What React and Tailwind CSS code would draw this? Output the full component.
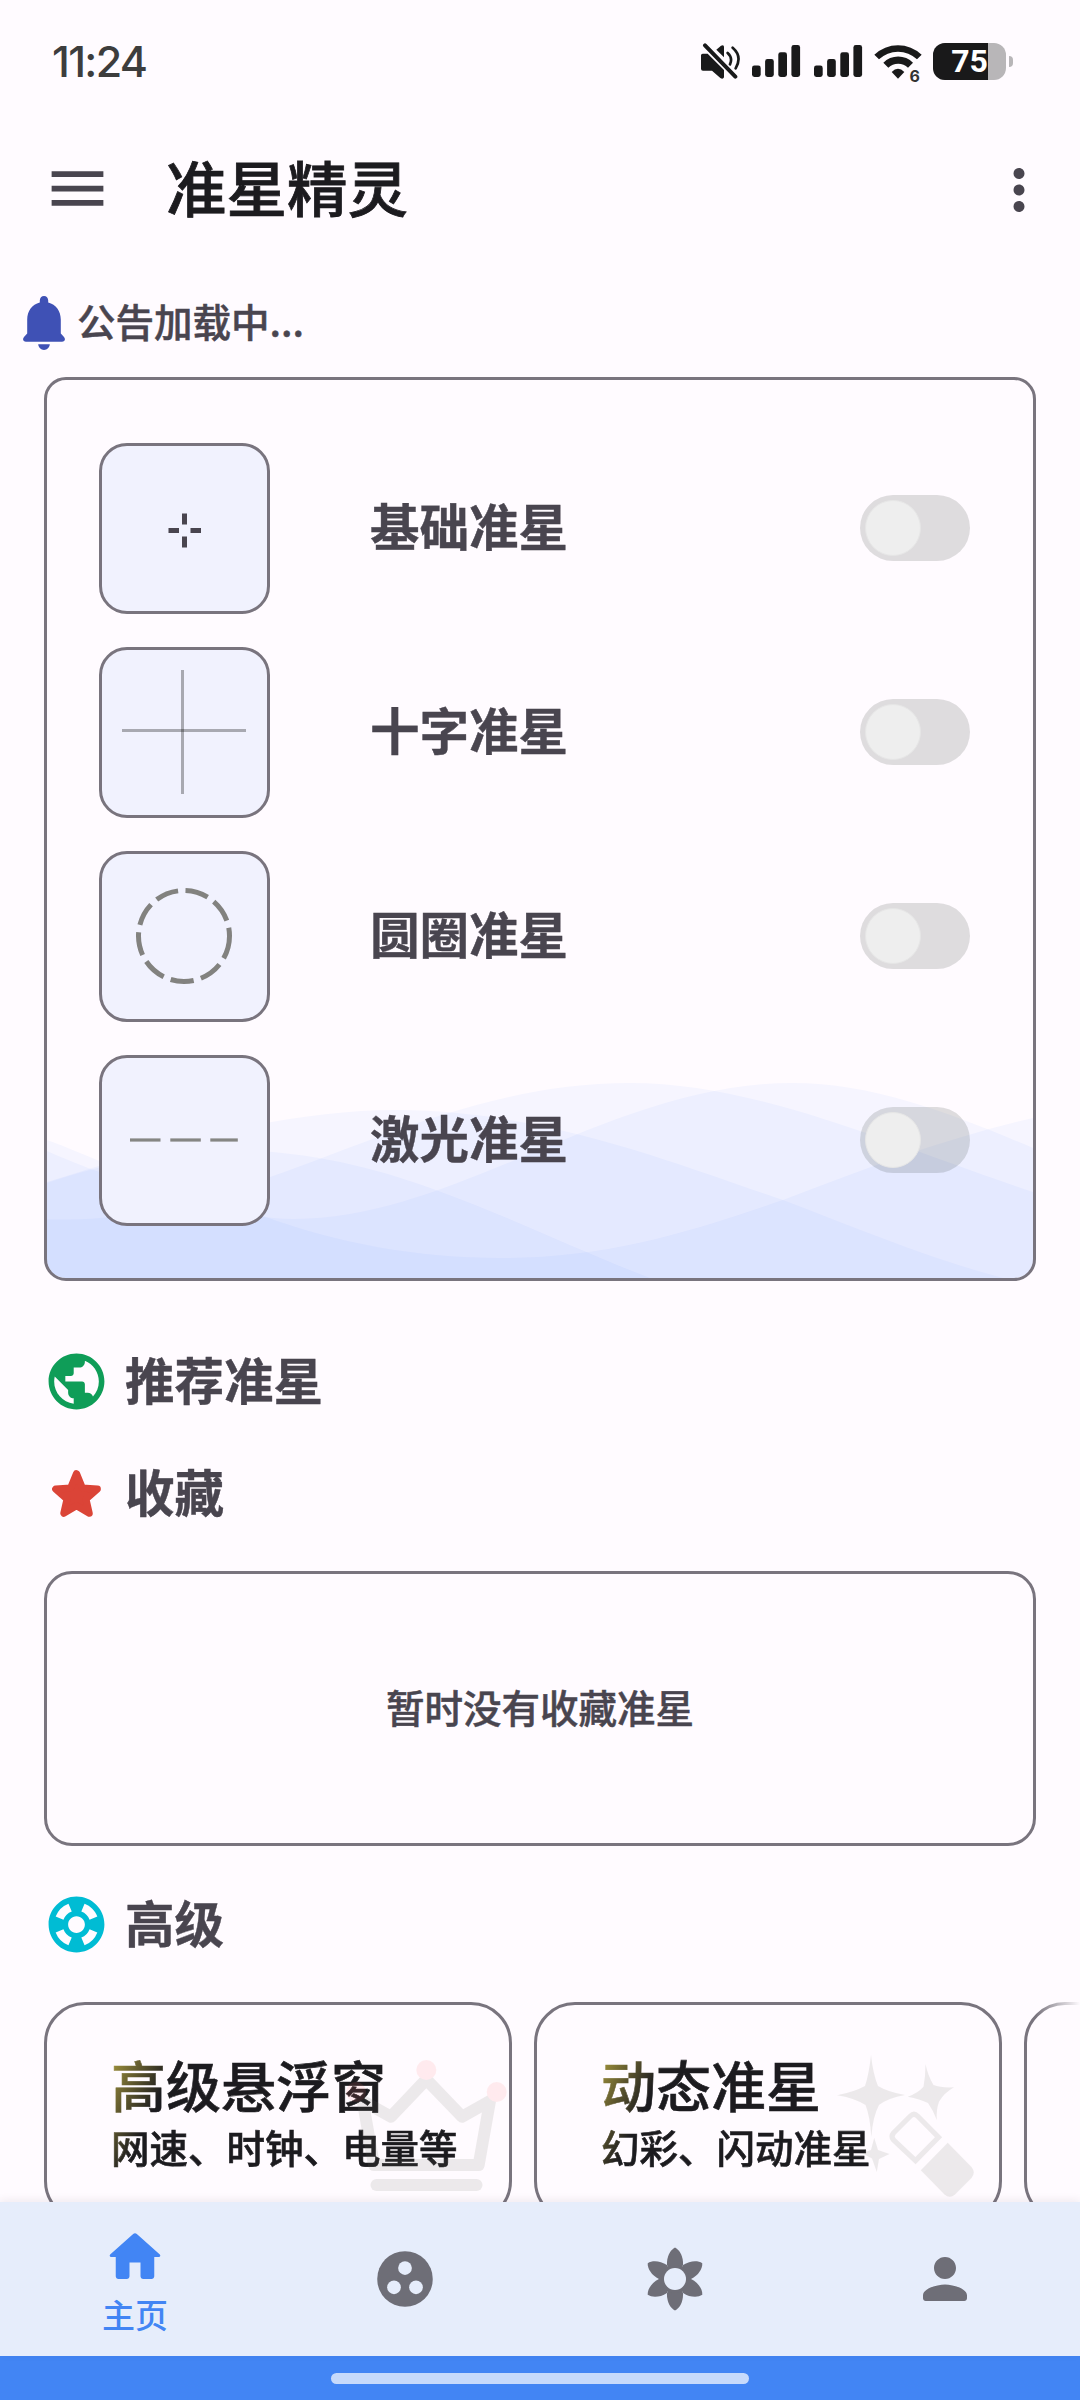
import React, { useState } from 'react';
import { MdPublic, MdSupport, MdMenu, MdMoreVert } from 'react-icons/md';

const SignalBars = ({ className }) => (
  <svg viewBox="0 0 49 32" className={`w-[49px] h-[32px] ${className}`} fill="#19191a">
    <rect x="0" y="20.5" width="8.7" height="11.5" rx="2.4" />
    <rect x="13.1" y="14" width="8.7" height="18" rx="2.4" />
    <rect x="26.3" y="7.3" width="8.7" height="24.7" rx="2.4" />
    <rect x="39.4" y="0" width="8.7" height="32" rx="2.4" />
  </svg>
);

const StatusBar = () => (
  <div className="flex h-[122px] shrink-0 items-center pl-[52px] pr-[67px]">
    <span className="text-[43px] leading-none tracking-[-1.7px] text-[#3d3d3d] font-['Inter'] font-medium">11:24</span>
    <div className="ml-auto flex items-center">
      <svg viewBox="0 0 117 108" className="w-[39px] h-[36px]" fill="#19191a">
        <path d="M0 37Q0 32 5 32H20L69 81V103Q66 110 58 105L33 83H6Q0 83 0 77Z" />
        <path d="M46 20L60 8Q69 4 69 12V43Z" />
        <path d="M12 7L103 101" stroke="#19191a" strokeWidth="12" strokeLinecap="round" />
        <path d="M80 30Q96 44 87 64M95 14Q125 40 104 76" stroke="#19191a" strokeWidth="8" strokeLinecap="round" fill="none" />
      </svg>
      <SignalBars className="ml-[12px]" />
      <SignalBars className="ml-[13px]" />
      <div className="relative ml-[11px] w-[48px] h-[35px]">
        <svg viewBox="0 0 142 105" className="w-[48px] h-[35px]" fill="#19191a">
          <path d="M0 32A103 103 0 0 1 142 32L128 46A82 82 0 0 0 14 46Z" />
          <path d="M27 56A62 62 0 0 1 116 56L101 71A42 42 0 0 0 42 71Z" />
          <path d="M52 84Q71 65 90 84L71 104Z" />
        </svg>
        <span className="absolute -bottom-[5px] right-[2px] text-[16px] leading-none font-bold text-[#333] font-['Inter']">6</span>
      </div>
      <div className="relative ml-[11px] flex h-[37px] w-[73px] items-center justify-center overflow-hidden rounded-[12px] bg-[#b8b6b8]">
        <div className="absolute inset-y-0 left-0 w-[55px] bg-[#19191a]" />
        <span className="relative text-[32px] leading-none font-bold text-white font-['Roboto']">75</span>
      </div>
      <div className="ml-[3px] h-[11px] w-[4px] rounded-r-full bg-[#b8b6b8]" />
    </div>
  </div>
);

const Waves = () => (
  <svg viewBox="0 0 986 200" className="absolute bottom-0 left-0 h-[200px] w-full" fill="#4a80ff" fillOpacity="0.046">
    <path d="M0 141.5H20C210 141.5 370 5 583 5C710 5 840 65 986 114V200H0Z" />
    <path d="M0 62C90 95 160 141 247 141C410 141 565 5 745 5C830 5 910 38 986 70V200H0Z" />
    <path d="M0 104C110 70 230 32 350 32C500 32 640 90 736 122C810 150 880 180 956 200H0Z" />
    <path d="M0 105C60 85 120 72 175 72C260 72 330 90 394 114C470 142 530 172 603 200H0Z" />
    <path d="M0 73C100 118 160 118 216 138C290 165 370 180 454 180C560 180 640 155 736 122C820 90 900 60 986 40V200H0Z" />
  </svg>
);

// previews are drawn on the same 171px square as the tile
const previews = {
  basic: (
    <g fill="#49454f">
      <rect x="83" y="70.5" width="5" height="11" />
      <rect x="83" y="93.5" width="5" height="11" />
      <rect x="69.5" y="85" width="10.5" height="5" />
      <rect x="91.5" y="85" width="10.5" height="5" />
    </g>
  ),
  cross: (
    <g fill="#000" fillOpacity="0.3">
      <rect x="82" y="23" width="3" height="124" />
      <rect x="23" y="82" width="124" height="3" />
    </g>
  ),
  circle: (
    <circle cx="85" cy="85" r="45.5" fill="none" stroke="#82827f" strokeWidth="5" strokeDasharray="23.3 7.5" />
  ),
  laser: (
    <g fill="#858683">
      <rect x="31" y="83.4" width="30.5" height="3.2" />
      <rect x="71.3" y="83.4" width="30.5" height="3.2" />
      <rect x="111.3" y="83.4" width="27.5" height="3.2" />
    </g>
  )
};

const Switch = ({ checked, onChange }) => (
  <button
    onClick={onChange}
    className={`h-[66px] w-[110px] rounded-full p-[5px] ${checked ? 'bg-[#4285f4]' : 'bg-[rgba(0,16,0,0.13)]'}`}
  >
    <div className={`size-[56px] rounded-full border border-[#e6e6e6] bg-[#eeeeee] ${checked ? 'ml-auto' : ''}`} />
  </button>
);

const CrosshairRow = ({ type, name }) => {
  const [checked, setChecked] = useState(false);

  return (
    <div className="relative flex items-center">
      <div className="size-[171px] overflow-hidden rounded-[28px] border-[3px] border-[#79747e] bg-[#f1f2fe]">
        <svg viewBox="0 0 171 171" className="-m-[3px] size-[171px]">{previews[type]}</svg>
      </div>
      <span className="ml-[100px] -mt-[7px] text-[49.5px] leading-none font-bold [-webkit-text-stroke:0.4px]">{name}</span>
      <div className="-mt-[2px] ml-auto flex">
        <Switch checked={checked} onChange={() => setChecked(!checked)} />
      </div>
    </div>
  );
};

const SectionTitle = ({ icon, children }) => (
  <div className="flex h-[112px] shrink-0 items-center pl-[43px]">
    {icon}
    <h2 className="ml-[15px] -mt-[5px] text-[49.5px] leading-none font-bold [-webkit-text-stroke:0.4px]">{children}</h2>
  </div>
);

const StarIcon = () => (
  <svg viewBox="0 0 66 66" className="size-[67px]" fill="#db4437" stroke="#db4437" strokeWidth="7" strokeLinejoin="round">
    <path d="M33 13.5L38.7 27.5L53.5 28.7L42.3 38.5L45.5 52.5L33 45L20.5 52.5L23.7 38.5L12.5 28.7L27.3 27.5Z" />
  </svg>
);

const CrownArt = () => (
  <svg viewBox="0 0 468 220" className="absolute -left-[3px] -top-[3px] h-[220px] w-[468px] opacity-12">
    <path
      d="M318.7 99L347 114.7L382.3 77.5L418 114.7L446 99L434.7 163H330Z"
      fill="none" stroke="#6c6c60" strokeWidth="12" strokeLinejoin="round"
    />
    <rect x="326.5" y="177" width="112" height="12" rx="6" fill="#6c6c60" />
    <circle cx="312" cy="90" r="10" fill="#ff7a7a" />
    <circle cx="382.3" cy="68" r="10" fill="#ff7a7a" />
    <circle cx="452.7" cy="90" r="10" fill="#ff7a7a" />
  </svg>
);

const WandArt = () => (
  <svg viewBox="0 0 468 220" className="absolute -left-[3px] -top-[3px] h-[220px] w-[468px] opacity-12" fill="#6c6c60">
    <path d="M337 53Q339 72 344 84Q354 90 371 93Q354 96 345 103Q339 114 337.3 135Q336 114 331.5 103Q320 96 303 93.3Q320 90 331 84Q335 72 337 53Z" />
    <path d="M391.5 62Q394 74 399.5 83Q407 86 420 85.3Q410 91 405 99.7Q402 108 402.8 118Q399 108 394 101Q386 97 373.7 94.7Q384 91 389.5 84.7Q391.5 74 391.5 62Z" />
    <path d="M340.2 135.7L344 148L355.5 152L345 157L342.8 170L338 156.5L328 151L337 148Z" />
    <path d="M381.5 158.6L404.5 135.2L383.5 114Q380 110.5 376.5 114L359.5 131Q356.5 134.5 359.5 138Z" fill="none" stroke="#6c6c60" strokeWidth="5.2" />
    <path d="M413.7 140.7L437.5 165Q442 170.7 437.5 176L421 192.5Q415.8 197 410.5 192.5L386.8 168.3Z" />
  </svg>
);

const AdvancedCard = ({ title, desc, art }) => (
  <div className="relative h-[220px] w-[468px] shrink-0 rounded-[41px] border-[3px] border-[#79747e] pl-[64px] pt-[48px]">
    <div className="w-fit bg-[linear-gradient(115deg,#a89a3e_0px,#1c1b1f_62px)] bg-clip-text font-medium text-transparent whitespace-nowrap [-webkit-text-stroke:0.6px_transparent]">
      <div className="text-[55px] leading-[60px]">{title}</div>
      <div className="mt-[8px] text-[38.5px] leading-[50px]">{desc}</div>
    </div>
    {art}
  </div>
);

const NavItem = ({ label, children }) => (
  <button className={`flex flex-1 flex-col items-center justify-center ${label ? 'text-[#4285f4]' : 'text-[#6e6e77]'}`}>
    {children}
    {label && <span className="mt-[6px] mb-[2px] text-[33px] leading-[36px] font-medium">{label}</span>}
  </button>
);

const BottomNav = () => (
  <nav className="relative flex h-[154px] shrink-0 bg-[#e6edfb] shadow-[0_-2px_8px_rgba(60,40,50,0.08)]">
    <NavItem label="主页">
      <svg viewBox="0 0 24 24" className="size-[66px]" fill="currentColor">
        <path d="M10 19v-5h4v5c0 .55.45 1 1 1h3c.55 0 1-.45 1-1v-7h1.7c.46 0 .68-.57.33-.87L12.67 3.6c-.38-.34-.96-.34-1.34 0l-8.36 7.53c-.34.3-.13.87.33.87H5v7c0 .55.45 1 1 1h3c.55 0 1-.45 1-1z" />
      </svg>
    </NavItem>
    <NavItem>
      <svg viewBox="0 0 24 24" className="size-[66px]">
        <circle cx="12" cy="12" r="10.1" fill="currentColor" />
        <g fill="#e6edfb">
          <circle cx="12" cy="8" r="2.5" />
          <circle cx="8" cy="15" r="2.5" />
          <circle cx="16" cy="15" r="2.5" />
        </g>
      </svg>
    </NavItem>
    <NavItem>
      <svg viewBox="-33 -33 66 66" className="size-[66px]" fill="currentColor">
        {[0, 60, 120, 180, 240, 300].map((deg) => (
          <path key={deg} transform={`rotate(${deg})`} d="M0 -31.5C-5 -29 -8.5 -22 -8 -13.9L0 0L8 -13.9C8.5 -22 5 -29 0 -31.5Z" />
        ))}
        <circle r="14" />
        <circle r="11" fill="#e6edfb" />
      </svg>
    </NavItem>
    <NavItem>
      <svg viewBox="0 0 24 24" className="size-[66px]" fill="currentColor">
        <path d="M12 12c2.21 0 4-1.79 4-4s-1.79-4-4-4-4 1.79-4 4 1.79 4 4 4zm0 2c-2.67 0-8 1.34-8 4v1c0 .55.45 1 1 1h14c.55 0 1-.45 1-1v-1c0-2.66-5.33-4-8-4z" />
      </svg>
    </NavItem>
  </nav>
);

const crosshairs = [
  { type: 'basic', name: '基础准星' },
  { type: 'cross', name: '十字准星' },
  { type: 'circle', name: '圆圈准星' },
  { type: 'laser', name: '激光准星' }
];

const App = () => {
  return (
    <div className="flex h-[2400px] w-[1080px] flex-col overflow-hidden bg-[#fffbff] text-[#49454f] font-['Noto_Sans_CJK_SC',sans-serif]">
      <StatusBar />

      <header className="flex h-[132px] shrink-0 items-center pl-[43px] pr-[28px]">
        <MdMenu className="size-[69px]" />
        <h1 className="ml-[54px] -mt-[3px] text-[60.5px] leading-none font-medium text-[#1c1b1f] [-webkit-text-stroke:0.8px]">准星精灵</h1>
        <MdMoreVert className="mt-1 ml-auto size-[66px]" />
      </header>

      <main className="flex min-h-0 flex-1 flex-col overflow-hidden">
        <div className="mt-[35px] mb-[20px] flex h-[68px] shrink-0 items-center pl-[23px]">
          <svg viewBox="0 0 42 54" className="w-[42px] h-[54px]" fill="#3f51b5">
            <path d="M21 0C23.5 0 25.2 2 25.2 4.5V6.5C33 8.5 37.8 15 37.8 23.5V37.5L41 41C43 43.5 41.5 45.7 39 45.7H3C.5 45.7 -1 43.5 1 41L4.2 37.5V23.5C4.2 15 9 8.5 16.8 6.5V4.5C16.8 2 18.5 0 21 0Z" />
            <path d="M15.2 48.3H26.8C26.5 51.5 24 54 21 54C18 54 15.5 51.5 15.2 48.3Z" />
          </svg>
          <span className="ml-[12px] -mt-[6px] text-[38.5px] leading-none font-medium [-webkit-text-stroke:0.5px]">公告加载中...</span>
        </div>

        <section className="relative mx-[44px] flex h-[904px] shrink-0 flex-col gap-[33px] overflow-hidden rounded-[22px] border-[3px] border-[#79747e] pt-[63px] pl-[52px] pr-[63px]">
          <Waves />
          {crosshairs.map((item) => (
            <CrosshairRow key={item.type} type={item.type} name={item.name} />
          ))}
        </section>

        <div className="h-[44px] shrink-0" />
        <SectionTitle icon={<MdPublic className="size-[67px] text-[#0f9d58]" />}>推荐准星</SectionTitle>
        <SectionTitle icon={<StarIcon />}>收藏</SectionTitle>

        <section className="mx-[44px] my-[22px] flex h-[275px] shrink-0 items-center justify-center rounded-[28px] border-[3px] border-[#79747e]">
          <p className="-mt-[5px] text-[38.5px] leading-none font-medium [-webkit-text-stroke:0.5px]">暂时没有收藏准星</p>
        </section>

        <SectionTitle icon={<MdSupport className="size-[67px] text-[#00bcd4]" />}>高级</SectionTitle>

        <div className="relative mt-[22px] flex shrink-0 gap-[22px] overflow-hidden pl-[44px]">
          <AdvancedCard title="高级悬浮窗" desc="网速、时钟、电量等" art={<CrownArt />} />
          <AdvancedCard title="动态准星" desc="幻彩、闪动准星" art={<WandArt />} />
          <AdvancedCard />
          <div className="absolute inset-y-0 right-0 w-[44px] bg-linear-to-r from-transparent to-[#fffbff]" />
        </div>
      </main>

      <BottomNav />
      <div className="flex h-[44px] shrink-0 justify-center bg-[#4285f4] pt-[17px]">
        <div className="h-[11px] w-[418px] rounded-full bg-[#c6dafb]" />
      </div>
    </div>
  );
};

export default App;
